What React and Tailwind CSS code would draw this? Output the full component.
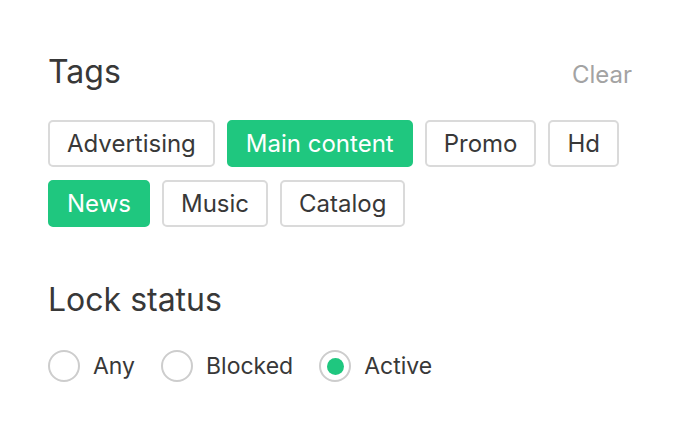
import { useState } from 'react';

const TAGS = ['Advertising', 'Main content', 'Promo', 'Hd', 'News', 'Music', 'Catalog'];
const STATUSES = ['Any', 'Blocked', 'Active'];

export default function App() {
  const [selected, setSelected] = useState(['Main content', 'News']);
  const [status, setStatus] = useState('Active');

  const toggle = (tag) => {
    setSelected(prev => prev.includes(tag) ? prev.filter(t => t !== tag) : [...prev, tag]);
  };

  return (
    <div className="w-[680px] h-[432px] bg-white px-12 pt-[52px] text-[#383838]" style={{ fontFamily: 'Inter, "Noto Sans", sans-serif' }}>
      {/* Tags */}
      <div className="flex items-baseline justify-between">
        <h2 className="text-[32px] leading-[40px] font-normal">Tags</h2>
        <button type="button" onClick={() => setSelected([])} className="text-[24px] text-[#a3a3a3]">
          Clear
        </button>
      </div>
      <div className="mt-[27px] flex flex-wrap gap-x-3 gap-y-[13px] w-[584px]">
        {TAGS.map(tag => {
          const on = selected.includes(tag);
          return (
            <button
              key={tag}
              type="button"
              onClick={() => toggle(tag)}
              className={
                on
                  ? 'h-[47px] px-[17px] rounded-[5px] border-2 border-[#1fc77f] bg-[#1fc77f] text-white text-[24px]'
                  : 'h-[47px] px-[17px] rounded-[5px] border-2 border-[#dadada] bg-white text-[#383838] text-[24px]'
              }
            >
              {tag}
            </button>
          );
        })}
      </div>

      {/* Lock status */}
      <h2 className="mt-[53px] text-[32px] leading-[40px] font-normal">Lock status</h2>
      <div className="mt-[29px] flex items-center gap-[26px]">
        {STATUSES.map(s => {
          const on = status === s;
          return (
            <label key={s} className="flex items-center gap-[13px] cursor-pointer" onClick={() => setStatus(s)}>
              <span className="w-[32px] h-[32px] rounded-full border-2 border-[#cdcdcd] flex items-center justify-center">
                {on && <span className="w-[17px] h-[17px] rounded-full bg-[#1fc77f]" />}
              </span>
              <span className="text-[23px]">{s}</span>
            </label>
          );
        })}
      </div>
    </div>
  );
}
